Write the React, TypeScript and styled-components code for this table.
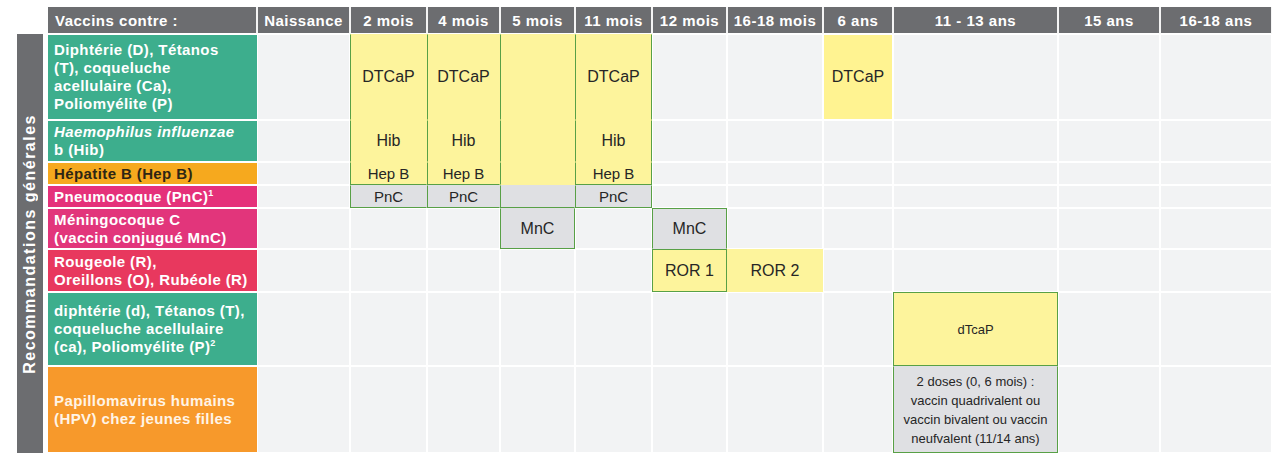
import React from 'react';
import styled, { createGlobalStyle } from 'styled-components';

type Tone = 'empty' | 'yellow' | 'gray' | 'sun';

interface Slot {
  tone: Tone;
  text?: React.ReactNode;
  edges?: string;
  size?: number;
}

interface RowData {
  key: string;
  color: string;
  ink?: string;
  label: React.ReactNode;
  slots: Record<number, Slot>;
}

const GREEN = '#58a046';

// defined up here because the row data below uses it
const Sup = styled.sup`
  font-size: 9px;
  line-height: 0;
`;

const COLUMNS = [
  'Naissance',
  '2 mois',
  '4 mois',
  '5 mois',
  '11 mois',
  '12 mois',
  '16-18 mois',
  '6 ans',
  '11 - 13 ans',
  '15 ans',
  '16-18 ans',
];

const ROWS: RowData[] = [
  {
    key: 'dtcap',
    color: '#3dae8d',
    label: (
      <>
        Diphtérie (D), Tétanos
        <br />
        (T), coqueluche
        <br />
        acellulaire (Ca),
        <br />
        Poliomyélite (P)
      </>
    ),
    slots: {
      1: { tone: 'yellow', text: 'DTCaP', edges: 'l' },
      2: { tone: 'yellow', text: 'DTCaP', edges: 'l' },
      3: { tone: 'yellow', edges: 'l' },
      4: { tone: 'yellow', text: 'DTCaP', edges: 'lr' },
      7: { tone: 'sun', text: 'DTCaP' },
    },
  },
  {
    key: 'hib',
    color: '#3dae8d',
    label: (
      <>
        <i>Haemophilus influenzae</i>
        <br />
        b (Hib)
      </>
    ),
    slots: {
      1: { tone: 'yellow', text: 'Hib', edges: 'l' },
      2: { tone: 'yellow', text: 'Hib', edges: 'l' },
      3: { tone: 'yellow', edges: 'l' },
      4: { tone: 'yellow', text: 'Hib', edges: 'lr' },
    },
  },
  {
    key: 'hepb',
    color: '#f6a91e',
    ink: '#2e2614',
    label: <>Hépatite B (Hep B)</>,
    slots: {
      1: { tone: 'yellow', text: 'Hep B', edges: 'lb', size: 15 },
      2: { tone: 'yellow', text: 'Hep B', edges: 'lb', size: 15 },
      3: { tone: 'yellow', edges: 'l' },
      4: { tone: 'yellow', text: 'Hep B', edges: 'lrb', size: 15 },
    },
  },
  {
    key: 'pnc',
    color: '#e5317a',
    label: (
      <>
        Pneumocoque (PnC)<Sup>1</Sup>
      </>
    ),
    slots: {
      1: { tone: 'gray', text: 'PnC', edges: 'lb', size: 15 },
      2: { tone: 'gray', text: 'PnC', edges: 'lb', size: 15 },
      3: { tone: 'gray', edges: 'lb' },
      4: { tone: 'gray', text: 'PnC', edges: 'lrb', size: 15 },
    },
  },
  {
    key: 'mnc',
    color: '#e2357b',
    label: (
      <>
        Méningocoque C
        <br />
        (vaccin conjugué MnC)
      </>
    ),
    slots: {
      3: { tone: 'gray', text: 'MnC', edges: 'lrb' },
      5: { tone: 'gray', text: 'MnC', edges: 'tlr' },
    },
  },
  {
    key: 'ror',
    color: '#e8385e',
    label: (
      <>
        Rougeole (R),
        <br />
        Oreillons (O), Rubéole (R)
      </>
    ),
    slots: {
      5: { tone: 'yellow', text: 'ROR 1', edges: 'tlrb' },
      6: { tone: 'yellow', text: 'ROR 2' },
    },
  },
  {
    key: 'dtcap-rappel',
    color: '#3dae8d',
    label: (
      <>
        diphtérie (d), Tétanos (T),
        <br />
        coqueluche acellulaire
        <br />
        (ca), Poliomyélite (P)<Sup>2</Sup>
      </>
    ),
    slots: {
      8: { tone: 'yellow', text: 'dTcaP', edges: 'tlrb', size: 13 },
    },
  },
  {
    key: 'hpv',
    color: '#f7992b',
    ink: '#fff4e6',
    label: (
      <>
        Papillomavirus humains
        <br />
        (HPV) chez jeunes filles
      </>
    ),
    slots: {
      8: {
        tone: 'gray',
        edges: 'lrb',
        size: 13,
        text: (
          <>
            2 doses (0, 6 mois) :
            <br />
            vaccin quadrivalent ou
            <br />
            vaccin bivalent ou vaccin
            <br />
            neufvalent (11/14 ans)
          </>
        ),
      },
    },
  },
];

const TONES: Record<Tone, string> = {
  empty: '#f2f3f4',
  yellow: '#fdf49c',
  gray: '#dfe0e3',
  sun: '#fff391',
};

const edgeColor = (tone: Tone, edges: string, side: string) => {
  if (edges.includes(side)) return GREEN;
  return tone === 'empty' || tone === 'sun' ? '#ffffff' : 'transparent';
};

function App(): JSX.Element {
  return (
    <>
      <GlobalStyle />
      <Page>
        <SideBar>
          <SideTitle>Recommandations générales</SideTitle>
        </SideBar>
        <Schedule>
          <HeadCell $first>Vaccins contre :</HeadCell>
          {COLUMNS.map((col) => (
            <HeadCell key={col}>{col}</HeadCell>
          ))}
          {ROWS.map((row) => (
            <React.Fragment key={row.key}>
              <Label $bg={row.color} $ink={row.ink}>
                <span>{row.label}</span>
              </Label>
              {COLUMNS.map((col, idx) => {
                const slot: Slot = row.slots[idx] || { tone: 'empty' };
                return (
                  <Dose
                    key={col}
                    $tone={slot.tone}
                    $edges={slot.edges || ''}
                    $size={slot.size || 16}
                  >
                    {slot.text}
                  </Dose>
                );
              })}
            </React.Fragment>
          ))}
        </Schedule>
      </Page>
    </>
  );
}

const GlobalStyle = createGlobalStyle`
  html, body {
    margin: 0;
    padding: 0;
    background: #ffffff;
    font-family: 'Liberation Sans', Arial, sans-serif;
  }
  * {
    box-sizing: border-box;
  }
`;

const Page = styled.div`
  display: flex;
  width: 1280px;
  height: 458px;
  padding: 7px 0 0 17px;
`;

const SideBar = styled.div`
  display: flex;
  align-items: center;
  justify-content: center;
  width: 26px;
  height: 419px;
  margin-top: 27px;
  margin-right: 5px;
  background: #6c6d70;
`;

const SideTitle = styled.div`
  writing-mode: vertical-rl;
  transform: rotate(180deg);
  color: #ffffff;
  font-size: 16px;
  font-weight: 700;
  letter-spacing: 1.5px;
  white-space: nowrap;
`;

const Schedule = styled.div`
  display: grid;
  grid-template-columns: 209px 93px 77px 73px 75px 77px 75px 96px 70px 165px 102px 112px;
  grid-template-rows: 27px 86px 42px 23px 23px 41px 43px 74px 87px;
  align-self: flex-start;
`;

const HeadCell = styled.div<{ $first?: boolean }>`
  display: flex;
  align-items: center;
  justify-content: ${({ $first }) => ($first ? 'flex-start' : 'center')};
  padding: ${({ $first }) => ($first ? '0 0 0 7px' : '0')};
  background: #6c6d70;
  border-left: ${({ $first }) => ($first ? 'none' : '1px solid #f4f4f4')};
  border-right: 1px solid #f4f4f4;
  border-bottom: 1px solid #ffffff;
  color: #ffffff;
  font-size: 15px;
  font-weight: 700;
  letter-spacing: 0.5px;
  white-space: nowrap;
`;

const Label = styled.div<{ $bg: string; $ink?: string }>`
  display: flex;
  align-items: center;
  padding: 0 4px 0 6px;
  background: ${({ $bg }) => $bg};
  border-top: 1px solid #ffffff;
  border-bottom: 1px solid #ffffff;
  color: ${({ $ink }) => $ink || '#ffffff'};
  font-size: 15px;
  font-weight: 700;
  letter-spacing: 0.4px;
  line-height: 18px;
  white-space: nowrap;
`;

const Dose = styled.div<{ $tone: Tone; $edges: string; $size: number }>`
  display: flex;
  align-items: center;
  justify-content: center;
  text-align: center;
  background: ${({ $tone }) => TONES[$tone]};
  border: 1px solid;
  border-top-color: ${({ $tone, $edges }) => edgeColor($tone, $edges, 't')};
  border-right-color: ${({ $tone, $edges }) => edgeColor($tone, $edges, 'r')};
  border-bottom-color: ${({ $tone, $edges }) => edgeColor($tone, $edges, 'b')};
  border-left-color: ${({ $tone, $edges }) => edgeColor($tone, $edges, 'l')};
  color: #262626;
  font-size: ${({ $size }) => $size}px;
  line-height: ${({ $size }) => ($size === 13 ? '19px' : '18px')};
  white-space: nowrap;
`;

export default App;
